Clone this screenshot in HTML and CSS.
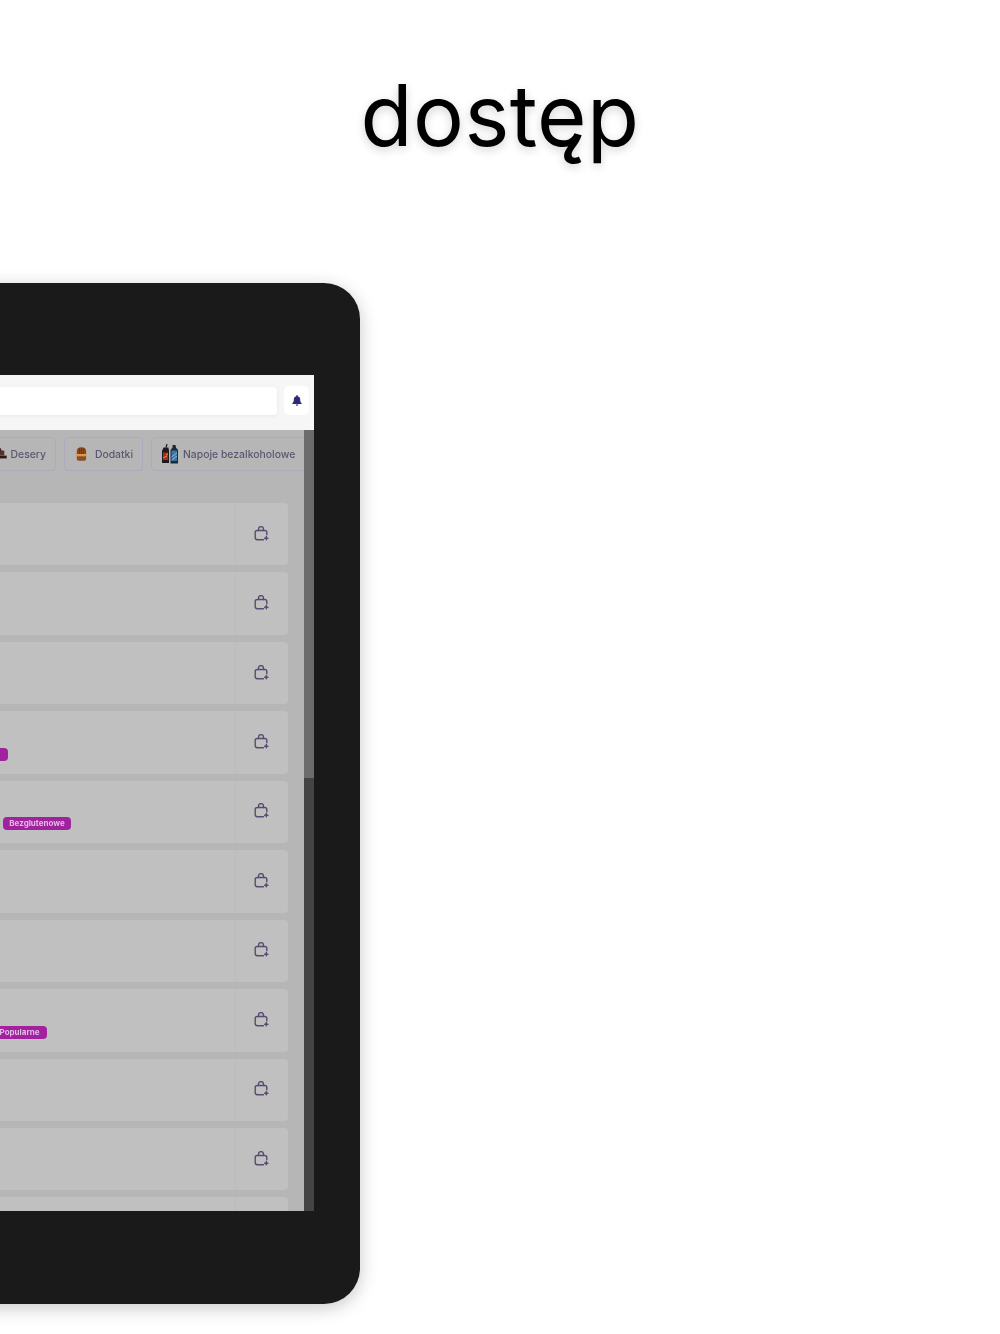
FILE: index.html
```html
<!DOCTYPE html>
<html lang="pl">
<head>
<meta charset="utf-8">
<title>dostęp</title>
<link rel="stylesheet" href="styles.css">
</head>
<body>
<svg class="defs" width="0" height="0" aria-hidden="true">
  <symbol id="bag" viewBox="0 0 15 15">
    <path d="M4.500 4.500V3.200C4.500 1.700 5.700.6 7 .6s2.500 1.100 2.500 2.600v1.300" fill="none" stroke="currentColor" stroke-width="1.400" stroke-linecap="round"/>
    <path d="M9.500 13.700H3.300C2 13.700 1.200 12.900 1.200 11.600V6.500C1.200 5.300 2 4.500 3.300 4.500h7.400c1.300 0 2.100.8 2.100 2v2.200" fill="none" stroke="currentColor" stroke-width="1.400" stroke-linecap="round"/>
    <path d="M12.300 10.600v3.200M10.700 12.200h3.200" fill="none" stroke="currentColor" stroke-width="1.500" stroke-linecap="round"/>
  </symbol>
</svg>
<main class="page">
  <h1 class="title">dostęp</h1>
  <section class="device">
    <div class="screen">
      <header class="topbar">
        <div class="search"></div>
        <button class="bell" type="button" aria-label="Powiadomienia">
          <svg width="10" height="11" viewBox="0 0 11 12"><path d="M5.500 0c.5 0 .8.3.8.8v.5C8 1.700 9 3 9 4.800c0 2 .5 3 1.600 4.200v.8H.4V9C1.500 7.800 2 6.800 2 4.800 2 3 3 1.700 4.700 1.300V.8c0-.5.3-.8.8-.8zM4.200 10.500h2.600c0 .8-.6 1.400-1.300 1.400s-1.300-.6-1.300-1.400z" fill="#2e2a78"/></svg>
        </button>
      </header>
      <div class="body">
        <div class="content">
          <nav class="chips">
            <a class="chip chip-desery">
              <svg width="18" height="14" viewBox="0 0 18 14"><path d="M0 9h17v3.500H0z" fill="#2a1c18"/><path d="M-2 5l10-3 6 1v6H-2z" fill="#5a3020"/><path d="M7 0h3v3H7z" fill="#2a1c18"/></svg>
              <span>Desery</span>
            </a>
            <a class="chip chip-dodatki">
              <svg width="14" height="18" viewBox="0 0 14 18"><path d="M1 6C1 2 3 .5 7 .5S13 2 13 6v3H1z" fill="#8a4a20"/><path d="M4.500 1.500v7M7 1v8M9.500 1.500v7" stroke="#5e2e14" stroke-width=".8"/><path d="M.5 9h13v3H.5z" fill="#e8963a"/><path d="M1 12h12v3.500c0 1-.8 2-2 2H3c-1.200 0-2-1-2-2z" fill="#8a5026"/></svg>
              <span>Dodatki</span>
            </a>
            <a class="chip chip-napoje">
              <svg width="18" height="20" viewBox="0 0 18 20"><path d="M6 0L5 3.500" stroke="#1c1c1c" stroke-width="1.200" fill="none"/><path d="M2.500 3.500h5L8 7v12H1V7z" fill="#1c1c1c"/><path d="M2 8.500h5V16H2z" fill="#b8222a"/><path d="M5 11l2-1M2 14l4-2" stroke="#e8b23a" stroke-width=".8"/><path d="M11.500 1h3l.5 2.500 2 2.500v13.500H9.500V6l2-2.500z" fill="#1e2a38"/><path d="M10.500 6.500h5.500V17h-5.500z" fill="#3a76a8"/><path d="M10.500 13l5.500-4M10.500 16l5.500-4" stroke="#bcd" stroke-width=".7"/></svg>
              <span>Napoje bezalkoholowe</span>
            </a>
          </nav>
          <ul class="rows">
            <li class="row"><div class="main"></div><div class="action"><svg class="bag"><use href="#bag"/></svg></div></li>
            <li class="row"><div class="main"></div><div class="action"><svg class="bag"><use href="#bag"/></svg></div></li>
            <li class="row"><div class="main"></div><div class="action"><svg class="bag"><use href="#bag"/></svg></div></li>
            <li class="row"><div class="main"><span class="tag tag-a">Wege</span></div><div class="action"><svg class="bag"><use href="#bag"/></svg></div></li>
            <li class="row"><div class="main"><span class="tag tag-b">Bezglutenowe</span></div><div class="action"><svg class="bag"><use href="#bag"/></svg></div></li>
            <li class="row"><div class="main"></div><div class="action"><svg class="bag"><use href="#bag"/></svg></div></li>
            <li class="row"><div class="main"></div><div class="action"><svg class="bag"><use href="#bag"/></svg></div></li>
            <li class="row"><div class="main"><span class="tag tag-c">Popularne</span></div><div class="action"><svg class="bag"><use href="#bag"/></svg></div></li>
            <li class="row"><div class="main"></div><div class="action"><svg class="bag"><use href="#bag"/></svg></div></li>
            <li class="row"><div class="main"></div><div class="action"><svg class="bag"><use href="#bag"/></svg></div></li>
            <li class="row"><div class="main"></div><div class="action"></div></li>
          </ul>
        </div>
        <div class="scrollbar"><div class="thumb"></div></div>
      </div>
    </div>
  </section>
</main>
</body>
</html>
```
FILE: styles.css
```css
* { box-sizing: border-box; }
html, body { margin: 0; height: 100%; background: #fff; }
body { overflow: hidden; font-family: "Inter", "Liberation Sans", sans-serif; }
.defs { position: absolute; }
.page { width: 1000px; height: 1334px; overflow: hidden; padding-top: 66px; }
.title {
  margin: 0; text-align: center; font-size: 85px; line-height: 100px; font-weight: 400;
  letter-spacing: .4px; color: #000; text-shadow: 0 3px 10px rgba(0,0,0,.18);
}
.device {
  width: 800px; height: 1021px; margin: 117px 0 0 -440px;
  padding: 92px 46px 93px 0;
  background: #1a1a1a; border-radius: 0 36px 36px 0;
  box-shadow: 0 4px 18px rgba(0,0,0,.22);
}
.screen { height: 836px; overflow: hidden; display: flex; flex-direction: column; filter: blur(.5px); }
.topbar {
  height: 55px; flex: none; background: #f6f6f6; display: flex; align-items: center;
  gap: 7px; padding: 0 5px 4px 0;
}
.search { flex: 1; height: 28px; background: #fff; border-radius: 4px; box-shadow: 0 1px 4px rgba(0,0,0,.06); }
.bell {
  width: 25px; height: 29px; border: 0; padding: 0; background: #fff; border-radius: 5px;
  display: flex; align-items: center; justify-content: center;
}
.body { flex: 1; min-height: 0; display: flex; background: #b6b6b6; }
.content { flex: 1; min-width: 0; overflow: hidden; }
.scrollbar { width: 10px; flex: none; background: #444; }
.thumb { height: 348px; background: #6c6c6c; }
.chips { height: 73px; padding-top: 7px; display: flex; justify-content: flex-end; gap: 8px; margin-right: -9px; }
.chip {
  height: 34px; display: flex; align-items: center; flex: none; padding: 0 9px;
  border: 1px solid #afa9bd; border-radius: 4px; color: #5c5670;
  font-size: 10.4px; font-weight: 500; white-space: nowrap;
}
.chip-desery { gap: 3px; width: 90px; padding-left: 26px; justify-content: flex-end; }
.chip-dodatki { gap: 8px; width: 79px; justify-content: flex-start; padding-left: 11px; }
.chip-napoje { gap: 4px; width: 162px; }
.rows { list-style: none; margin: 0 0 0 -500px; padding: 0 16px 0 0; display: flex; flex-direction: column; gap: 7px; }
.row { height: 62.44px; flex: none; display: flex; background: #c0c0c0; border-radius: 4px; }
.main { flex: 1; position: relative; }
.tag {
  position: absolute; bottom: 13px; height: 13px; border-radius: 4px; background: #a0229f;
  color: #e3bde2; font-size: 8px; line-height: 13px; font-weight: 700; text-align: center;
}
.tag-a { right: 227px; width: 60px; }
.tag-b { right: 164px; width: 68px; }
.tag-c { right: 188px; width: 55px; }
.action { width: 53px; flex: none; border-left: 1px solid #bbb; display: flex; align-items: center; justify-content: center; padding: 0 2px 2px 0; color: #5a4a70; }
.bag { width: 15px; height: 15px; }
```
